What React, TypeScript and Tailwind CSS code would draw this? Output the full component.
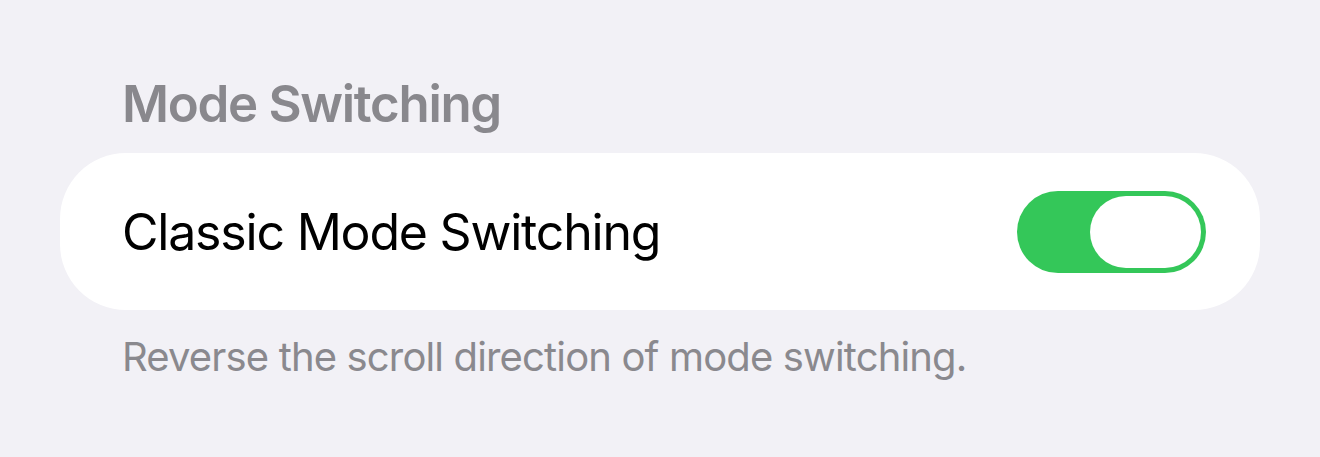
export default function App() {
  return (
    <div className="w-[1320px] h-[457px] bg-[#f2f1f6] overflow-hidden" style={{ fontFamily: 'Inter, "Noto Sans", sans-serif' }}>
      <div className="pt-[74px] pl-[60px] w-[1260px]">
        <div className="pl-[62px] text-[51px] leading-[60px] font-semibold text-[#89888d] tracking-[-1.3px]">Mode Switching</div>
        <div className="mt-[19px] h-[157px] bg-white rounded-[66px] flex items-center justify-between pl-[62px] pr-[54px]">
          <span className="text-[50px] leading-[60px] text-black tracking-[-1.2px]">Classic Mode Switching</span>
          <div className="w-[189px] h-[82px] rounded-full bg-[#34c759] p-[5px] flex justify-end">
            <div className="w-[111px] h-[72px] rounded-full bg-white" />
          </div>
        </div>
        <div className="pl-[62px] mt-[21px] text-[40px] leading-[52px] text-[#8a898e] tracking-[-0.85px]">Reverse the scroll direction of mode switching.</div>
      </div>
    </div>
  );
}
